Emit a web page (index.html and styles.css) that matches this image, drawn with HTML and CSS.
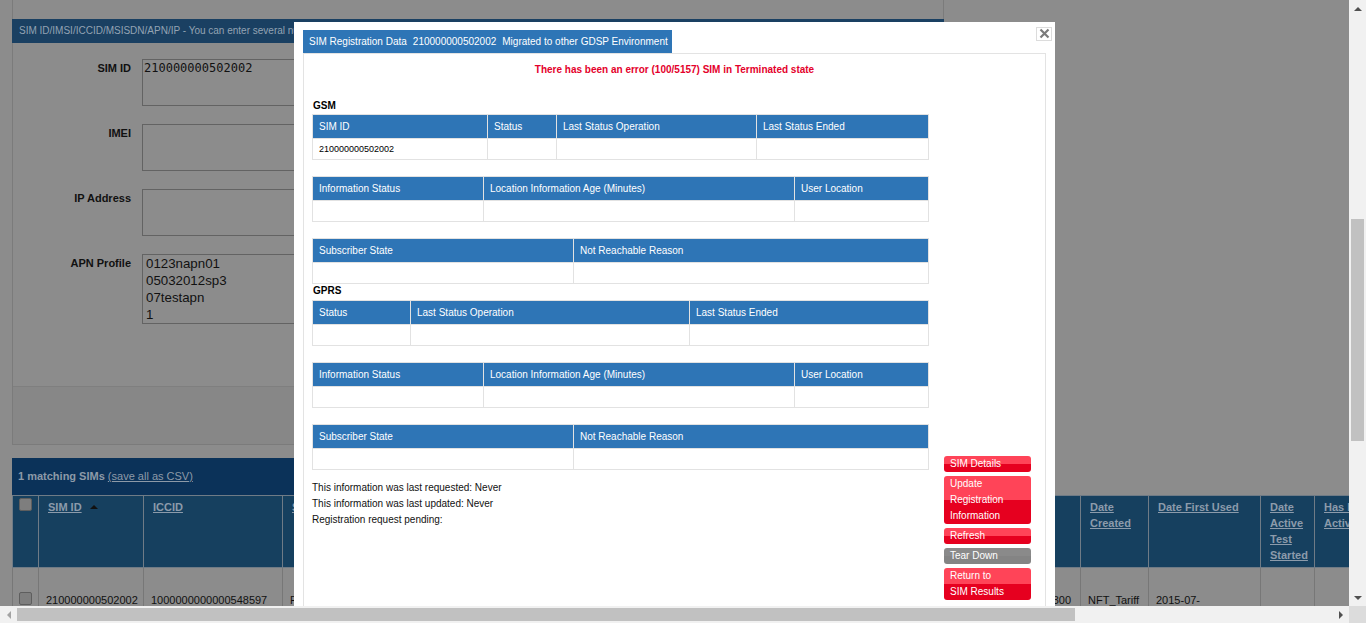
FILE: index.html
```html
<!DOCTYPE html>
<html>
<head>
<meta charset="utf-8">
<title>SIM Registration Data</title>
<link rel="stylesheet" href="styles.css">
</head>
<body>
<div class="window">
  <div class="viewport">
    <div class="page">
      <div class="panel-stub"></div>
      <div class="search-panel">
        <div class="search-head">SIM ID/IMSI/ICCID/MSISDN/APN/IP - You can enter several numbers separated by a new line or a comma</div>
        <div class="search-body">
          <div class="form-row">
            <div class="form-label">SIM ID</div>
            <div class="field field-mono">210000000502002</div>
          </div>
          <div class="form-row">
            <div class="form-label">IMEI</div>
            <div class="field"></div>
          </div>
          <div class="form-row">
            <div class="form-label">IP Address</div>
            <div class="field"></div>
          </div>
          <div class="form-row">
            <div class="form-label">APN Profile</div>
            <div class="field field-list">
              <div>0123napn01</div>
              <div>05032012sp3</div>
              <div>07testapn</div>
              <div>1</div>
            </div>
          </div>
        </div>
        <div class="button-bar"></div>
      </div>
      <div class="results-bar"><b>1 matching SIMs</b> <span class="link">(save all as CSV)</span></div>
      <table class="sims">
        <colgroup>
          <col class="c-chk"><col class="c-simid"><col class="c-iccid">
          <col class="c-mid"><col class="c-mid"><col class="c-mid"><col class="c-mid2">
          <col class="c-date"><col class="c-first"><col class="c-test"><col class="c-active">
        </colgroup>
        <thead>
          <tr>
            <th class="chk-cell"><span class="chk"></span></th>
            <th><span class="hl">SIM ID</span><span class="sort"></span></th>
            <th><span class="hl">ICCID</span></th>
            <th><span class="hl">Status</span></th>
            <th><span class="hl">MSISDN</span></th>
            <th><span class="hl">IMSI</span></th>
            <th><span class="hl">Data Usage</span></th>
            <th><span class="hl">Date Created</span></th>
            <th><span class="hl">Date First Used</span></th>
            <th><span class="hl">Date Active Test Started</span></th>
            <th><span class="hl">Has Been Active</span></th>
          </tr>
        </thead>
        <tbody>
          <tr>
            <td class="chk-cell"><span class="chk"></span></td>
            <td>210000000502002</td>
            <td>1000000000000548597</td>
            <td>Registered</td>
            <td>882393250502002</td>
            <td>214075500502002</td>
            <td class="num">8640300</td>
            <td>NFT_Tariff</td>
            <td>2015-07-<br>14 10:24:13</td>
            <td></td>
            <td></td>
          </tr>
        </tbody>
      </table>
    </div>

    <div class="modal">
      <div class="close">
        <svg width="13" height="12" viewBox="0 0 13 12"><path d="M2.5 1.5 L10.5 9.5 M10.5 1.5 L2.5 9.5" stroke="#7b7b7b" stroke-width="2.2" fill="none"/></svg>
      </div>
      <div class="tab"><span>SIM Registration Data</span><span>210000000502002</span><span>Migrated to other GDSP Environment</span></div>
      <div class="inner">
        <div class="error">There has been an error (100/5157) SIM in Terminated state</div>
        <div class="content">
          <div class="main">
            <div class="section-label gsm">GSM</div>
            <table class="dt">
              <colgroup><col class="w175"><col class="w69"><col class="w200"><col class="w172"></colgroup>
              <tr><th>SIM ID</th><th>Status</th><th>Last Status Operation</th><th>Last Status Ended</th></tr>
              <tr><td>210000000502002</td><td></td><td></td><td></td></tr>
            </table>
            <table class="dt spaced">
              <colgroup><col class="w171"><col class="w311"><col class="w134"></colgroup>
              <tr><th>Information Status</th><th>Location Information Age (Minutes)</th><th>User Location</th></tr>
              <tr><td></td><td></td><td></td></tr>
            </table>
            <table class="dt spaced">
              <colgroup><col class="w261"><col class="w355"></colgroup>
              <tr><th>Subscriber State</th><th>Not Reachable Reason</th></tr>
              <tr><td></td><td></td></tr>
            </table>
            <div class="section-label gprs">GPRS</div>
            <table class="dt">
              <colgroup><col class="w98"><col class="w279"><col class="w239"></colgroup>
              <tr><th>Status</th><th>Last Status Operation</th><th>Last Status Ended</th></tr>
              <tr><td></td><td></td><td></td></tr>
            </table>
            <table class="dt spaced">
              <colgroup><col class="w171"><col class="w311"><col class="w134"></colgroup>
              <tr><th>Information Status</th><th>Location Information Age (Minutes)</th><th>User Location</th></tr>
              <tr><td></td><td></td><td></td></tr>
            </table>
            <table class="dt spaced">
              <colgroup><col class="w261"><col class="w355"></colgroup>
              <tr><th>Subscriber State</th><th>Not Reachable Reason</th></tr>
              <tr><td></td><td></td></tr>
            </table>
            <div class="info">
              <div>This information was last requested: Never</div>
              <div>This information was last updated: Never</div>
              <div>Registration request pending:</div>
            </div>
          </div>
          <div class="actions">
            <div class="btn">SIM Details</div>
            <div class="btn">Update<br>Registration<br>Information</div>
            <div class="btn">Refresh</div>
            <div class="btn gray">Tear Down</div>
            <div class="btn">Return to<br>SIM Results</div>
          </div>
        </div>
      </div>
    </div>
  </div>

  <div class="vscroll">
    <div class="arrow-cell"><span class="tri up"></span></div>
    <div class="vtrack"><div class="vthumb"></div></div>
    <div class="arrow-cell"><span class="tri down"></span></div>
  </div>
  <div class="hscroll">
    <div class="arrow-cell"><span class="tri left"></span></div>
    <div class="htrack"><div class="hthumb"></div></div>
    <div class="arrow-cell"><span class="tri right"></span></div>
  </div>
  <div class="corner"></div>
</div>
</body>
</html>
```

FILE: styles.css
```css
* { box-sizing: border-box; }
html, body { margin: 0; padding: 0; }
body {
  width: 1366px;
  height: 623px;
  overflow: hidden;
  font-family: "Liberation Sans", Arial, sans-serif;
  background: #8c8c8c;
}
.window {
  display: grid;
  grid-template-columns: 1349px 17px;
  grid-template-rows: 606px 17px;
  width: 1366px;
  height: 623px;
}
.viewport {
  position: relative;
  overflow: hidden;
  background: #8c8c8c;
}

/* ---------- background page (dimmed) ---------- */
.page { padding-left: 12px; }
.panel-stub {
  width: 932px;
  height: 19px;
  border-left: 1px solid #7b7b7b;
  border-right: 1px solid #7b7b7b;
}
.search-panel {
  width: 932px;
  border: 1px solid #7b7b7b;
  border-top: 0;
}
.search-head {
  height: 24px;
  margin: 0 -1px;
  background: #1a4062;
  color: #93a3b3;
  font-size: 10px;
  line-height: 24px;
  padding-left: 7px;
  white-space: nowrap;
  overflow: hidden;
}
.search-body {
  height: 343px;
  padding-top: 16px;
  display: flex;
  flex-direction: column;
  gap: 18px;
}
.form-row { display: flex; gap: 11px; }
.form-label {
  width: 118px;
  text-align: right;
  font-weight: bold;
  font-size: 11px;
  line-height: 14px;
  padding-top: 2px;
  color: #111;
}
.field {
  width: 420px;
  height: 47px;
  border: 1px solid #636363;
  background: #8c8c8c;
  color: #111;
}
.field-mono {
  font-family: "DejaVu Sans Mono", "Liberation Mono", monospace;
  font-size: 12px;
  line-height: 14px;
  padding: 1px 1px;
}
.field-list {
  height: 70px;
  font-size: 13.3px;
  line-height: 17px;
  padding: 0 3px;
}
.button-bar {
  height: 58px;
  background: #878787;
  border-top: 1px solid #7f7f7f;
}
.results-bar {
  width: 932px;
  margin-top: 13px;
  height: 37px;
  background: #0b3259;
  color: #8d9aa8;
  font-size: 11px;
  line-height: 37px;
  padding-left: 6px;
}
.results-bar .link { text-decoration: underline; }

.sims {
  border-collapse: collapse;
  table-layout: fixed;
  width: 1382px;
}
.c-chk { width: 26px; }
.c-simid { width: 105px; }
.c-iccid { width: 139px; }
.c-mid { width: 200px; }
.c-mid2 { width: 198px; }
.c-date { width: 68px; }
.c-first { width: 112px; }
.c-test { width: 54px; }
.c-active { width: 80px; }
.sims th {
  background: #16405f;
  border: 1px solid #6f7b86;
  height: 72px;
  padding: 3px 9px 0;
  vertical-align: top;
  text-align: left;
  font-size: 11px;
  line-height: 16px;
  font-weight: bold;
  color: #8c9bab;
}
.sims th.chk-cell { padding: 2px 0 0 6px; }
.sims td.chk-cell { padding: 24px 0 0 6px; }
.hl { text-decoration: underline; }
.sort {
  display: inline-block;
  margin-left: 8px;
  vertical-align: 2px;
  border-left: 4px solid transparent;
  border-right: 4px solid transparent;
  border-bottom: 4px solid #111;
}
.sims td {
  border: 1px solid #777;
  height: 80px;
  padding: 24px 7px 0;
  vertical-align: top;
  font-size: 11px;
  line-height: 16px;
  color: #111;
}
.sims td.num { text-align: right; padding-right: 9px; }
.chk {
  display: block;
  width: 13px;
  height: 13px;
  border: 1px solid #5e5e5e;
  border-radius: 2px;
  background: #7e7e7e;
}

/* ---------- modal ---------- */
.modal {
  position: absolute;
  left: 294px;
  top: 22px;
  width: 761px;
  height: 640px;
  background: #fff;
  padding: 8px 9px 0;
}
.close {
  position: absolute;
  left: 742px;
  top: 5px;
  width: 16px;
  height: 14px;
  border: 1px solid #dcdcdc;
  display: flex;
  align-items: center;
  justify-content: center;
}
.close svg { display: block; }
.tab {
  display: inline-flex;
  gap: 6px;
  height: 23px;
  background: #2e75b6;
  color: #fff;
  font-size: 10px;
  line-height: 23px;
  padding: 0 4px 0 6px;
  white-space: nowrap;
}
.inner {
  border: 1px solid #e3e3e3;
  height: 620px;
  padding: 9px 8px 0;
}
.error {
  text-align: center;
  color: #e4002b;
  font-weight: bold;
  font-size: 10px;
  line-height: 14px;
}
.content { display: flex; gap: 16px; }
.main { width: 616px; }
.section-label {
  font-weight: bold;
  font-size: 10px;
  line-height: 12px;
  padding-left: 1px;
  color: #000;
  margin-bottom: 2px;
}
.section-label.gsm { margin-top: 23px; }
.section-label.gprs { margin-top: 1px; margin-bottom: 3px; }
.dt {
  width: 616px;
  border-collapse: collapse;
  table-layout: fixed;
}
.dt.spaced { margin-top: 16px; }
.w69 { width: 69px; }
.w98 { width: 98px; }
.w134 { width: 134px; }
.w171 { width: 171px; }
.w172 { width: 172px; }
.w175 { width: 175px; }
.w200 { width: 200px; }
.w239 { width: 239px; }
.w261 { width: 261px; }
.w279 { width: 279px; }
.w311 { width: 311px; }
.w355 { width: 355px; }
.dt th {
  background: #2e75b6;
  color: #fff;
  font-weight: normal;
  font-size: 10px;
  height: 24px;
  padding: 0 6px;
  text-align: left;
  border: 1px solid #e2e2e2;
  white-space: nowrap;
}
.dt td {
  height: 21px;
  padding: 0 6px;
  font-size: 9px;
  color: #000;
  border: 1px solid #e2e2e2;
}
.info {
  margin-top: 10px;
  font-size: 10px;
  line-height: 16px;
  color: #111;
}
.actions {
  width: 87px;
  padding-top: 379px;
  display: flex;
  flex-direction: column;
  gap: 4px;
}
.btn {
  width: 87px;
  color: #fff;
  font-size: 10px;
  line-height: 16px;
  padding: 0 6px;
  border-radius: 3px;
  background: linear-gradient(#ff4458 50%, #e6001f 50%);
  white-space: nowrap;
}
.btn.gray { background: linear-gradient(#8a8a8a 50%, #848484 50%); }

/* ---------- scrollbars ---------- */
.vscroll {
  background: #f1f1f1;
  display: grid;
  grid-template-rows: 17px 1fr 17px;
}
.hscroll {
  background: #f1f1f1;
  display: grid;
  grid-template-columns: 17px 1fr 17px;
}
.arrow-cell {
  display: flex;
  align-items: center;
  justify-content: center;
}
.vtrack { padding: 0 2px; }
.vthumb {
  margin-top: 202px;
  height: 222px;
  background: #c1c1c1;
}
.htrack { padding: 2px 0; }
.hthumb {
  width: 1058px;
  height: 100%;
  background: #c1c1c1;
}
.corner { background: #dcdcdc; }
.tri { display: block; width: 0; height: 0; }
.tri.up {
  border-left: 4px solid transparent;
  border-right: 4px solid transparent;
  border-bottom: 4px solid #505050;
}
.tri.down {
  border-left: 4px solid transparent;
  border-right: 4px solid transparent;
  border-top: 4px solid #505050;
}
.tri.left {
  border-top: 4px solid transparent;
  border-bottom: 4px solid transparent;
  border-right: 4px solid #a3a3a3;
}
.tri.right {
  border-top: 4px solid transparent;
  border-bottom: 4px solid transparent;
  border-left: 4px solid #505050;
}
```
